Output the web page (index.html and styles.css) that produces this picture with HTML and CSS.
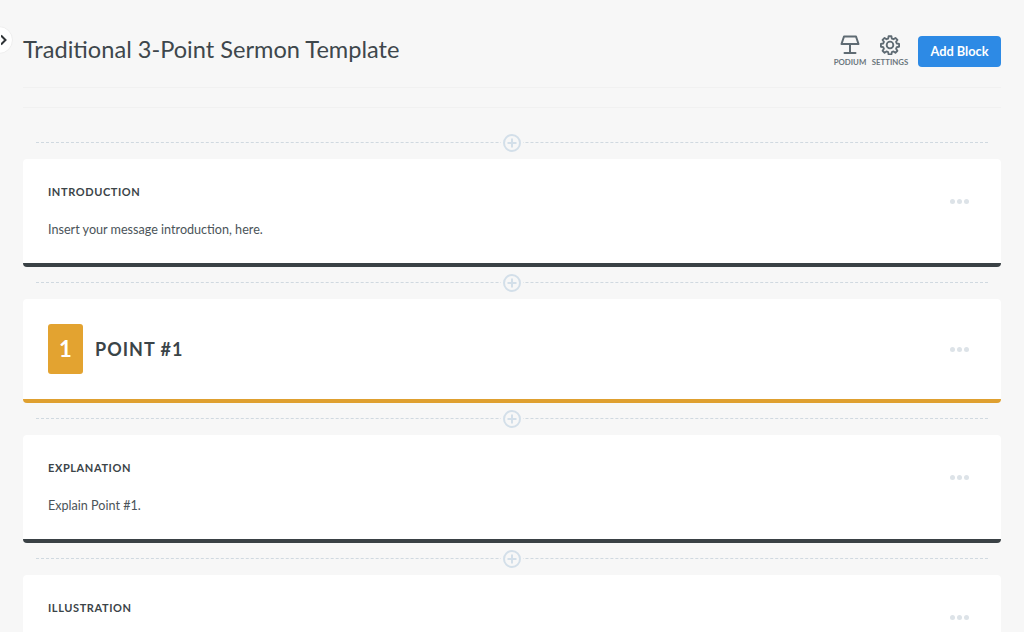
FILE: index.html
```html
<!DOCTYPE html>
<html lang="en">
<head>
<meta charset="utf-8">
<title>Traditional 3-Point Sermon Template</title>
<link rel="stylesheet" href="styles.css">
</head>
<body>
<button class="toggle" aria-label="Toggle sidebar">
  <svg width="8" height="12" viewBox="0 0 8 12"><path d="M0 1.500 4.500 6 0 10.500" fill="none" stroke="#2f3437" stroke-width="2"/></svg>
</button>
<main class="page">
  <header class="header">
    <h1 class="title">Traditional 3-Point Sermon Template</h1>
    <div class="actions">
      <div class="tool">
        <svg width="20" height="20" viewBox="0 0 20 20" fill="none" stroke="#5f6b73" stroke-width="2" stroke-linejoin="round" stroke-linecap="round"><path d="M4 1.500h12l2.500 7.500H1.500z"/><path d="M10 9v8.500M4.500 18h11"/></svg>
        <span>PODIUM</span>
      </div>
      <div class="tool">
        <svg width="20" height="20" viewBox="0 0 24 24" fill="none" stroke="#5f6b73" stroke-width="2.200" stroke-linejoin="round"><circle cx="12" cy="12" r="4"/><path d="M10.300 1.500h3.400l.5 2.800 2 .8 2.300-1.600 2.400 2.400-1.600 2.300.8 2 2.800.5v3.400l-2.800.5-.8 2 1.600 2.300-2.400 2.400-2.300-1.600-2 .8-.5 2.800h-3.400l-.5-2.800-2-.8-2.300 1.600-2.400-2.400 1.600-2.300-.8-2-2.800-.5v-3.400l2.800-.5.8-2-1.600-2.300 2.400-2.400 2.300 1.600 2-.8z"/></svg>
        <span>SETTINGS</span>
      </div>
      <button class="add">Add Block</button>
    </div>
  </header>
  <div class="rules"></div>

  <div class="divider"><span class="plus"><svg width="18" height="18" viewBox="0 0 18 18" fill="none" stroke="#d3dfe9" stroke-width="2"><circle cx="9" cy="9" r="8"/><path d="M9 4.500v9M4.500 9h9"/></svg></span></div>
  <section class="card dark">
    <div class="more"><i></i><i></i><i></i></div>
    <h2 class="label">INTRODUCTION</h2>
    <p class="text">Insert your message introduction, here.</p>
  </section>

  <div class="divider"><span class="plus"><svg width="18" height="18" viewBox="0 0 18 18" fill="none" stroke="#d3dfe9" stroke-width="2"><circle cx="9" cy="9" r="8"/><path d="M9 4.500v9M4.500 9h9"/></svg></span></div>
  <section class="card gold point">
    <span class="badge">1</span>
    <h2 class="point-title">POINT #1</h2>
    <div class="more more-point"><i></i><i></i><i></i></div>
  </section>

  <div class="divider"><span class="plus"><svg width="18" height="18" viewBox="0 0 18 18" fill="none" stroke="#d3dfe9" stroke-width="2"><circle cx="9" cy="9" r="8"/><path d="M9 4.500v9M4.500 9h9"/></svg></span></div>
  <section class="card dark">
    <div class="more"><i></i><i></i><i></i></div>
    <h2 class="label">EXPLANATION</h2>
    <p class="text">Explain Point #1.</p>
  </section>

  <div class="divider"><span class="plus"><svg width="18" height="18" viewBox="0 0 18 18" fill="none" stroke="#d3dfe9" stroke-width="2"><circle cx="9" cy="9" r="8"/><path d="M9 4.500v9M4.500 9h9"/></svg></span></div>
  <section class="card cut">
    <div class="more"><i></i><i></i><i></i></div>
    <h2 class="label">ILLUSTRATION</h2>
  </section>
</main>
</body>
</html>
```
FILE: styles.css
```css
* { box-sizing: border-box; }
html, body { margin: 0; height: 632px; overflow: hidden; }
body {
  background: #f7f7f7;
  font-family: Lato, "Open Sans", sans-serif;
  color: #3b4448;
}
.toggle {
  position: absolute;
  left: -15px;
  top: 26px;
  width: 28px;
  height: 28px;
  padding: 0 0 0 15px;
  border: 1px solid #eeeeee;
  border-radius: 50%;
  background: #fff;
  display: flex;
  align-items: center;
  justify-content: flex-start;
}
.page { padding: 0 23px; }
.header {
  height: 87px;
  padding-top: 35px;
  display: flex;
  justify-content: space-between;
  align-items: flex-start;
}
.title {
  margin: 0;
  font-size: 23.600px;
  line-height: 28px;
  font-weight: 400;
  color: #3e474c;
}
.actions { display: flex; align-items: flex-start; margin-top: 1px; }
.tool {
  width: 40px;
  margin-top: -1px;
  display: flex;
  flex-direction: column;
  align-items: center;
  font-size: 7.800px;
  font-weight: 700;
  line-height: 10px;
  color: #6b767d;
}
.tool svg { margin-bottom: 2px; }
.add {
  margin-left: 8px;
  width: 83px;
  height: 31px;
  padding-bottom: 2px;
  border: 0;
  border-radius: 4px;
  background: #2d8ae5;
  color: #fff;
  font: 700 12.800px Lato, sans-serif;
}
.rules {
  height: 21px;
  border-top: 1px solid #f1f1f1;
  border-bottom: 1px solid #f1f1f1;
}
.rules + .divider { margin-top: 19px; }
.divider {
  height: 32px;
  display: flex;
  align-items: center;
  justify-content: center;
  position: relative;
}
.divider::before {
  content: "";
  position: absolute;
  left: 13px;
  right: 13px;
  top: 50%;
  margin-top: -1px;
  border-top: 1px dashed #d0d9e0;
}
.plus {
  position: relative;
  width: 22px;
  height: 18px;
  background: #f7f7f7;
  display: flex;
  justify-content: center;
}
.card {
  position: relative;
  background: #fff;
  border-radius: 4px;
  padding: 26px 25px 25px;
}
.dark { height: 108px; border-bottom: 4px solid #3a4145; }
.gold { height: 104px; padding-top: 25px; border-bottom: 4px solid #dfa030; }
.cut { height: 57px; border-radius: 4px 4px 0 0; }
.label {
  margin: 0 0 20.500px;
  font-size: 11px;
  line-height: 14px;
  font-weight: 700;
  letter-spacing: 0.600px;
  color: #3b4448;
}
.text {
  margin: 0;
  font-size: 12.600px;
  line-height: 20px;
  color: #4b5459;
}
.more {
  position: absolute;
  right: 32px;
  top: 40px;
  display: flex;
  gap: 2px;
}
.more i {
  width: 5px;
  height: 5px;
  border-radius: 50%;
  background: #dde3e8;
}
.more-point { top: 48px; }
.point { display: flex; align-items: flex-start; }
.badge {
  width: 35px;
  height: 50px;
  border-radius: 3px;
  background: #e3a330;
  color: #fff;
  font-size: 22px;
  font-weight: 700;
  line-height: 50px;
  text-align: center;
}
.point-title {
  margin: 0 0 0 12px;
  font-size: 18px;
  line-height: 50px;
  font-weight: 700;
  letter-spacing: 1px;
  color: #3b4448;
}
```
